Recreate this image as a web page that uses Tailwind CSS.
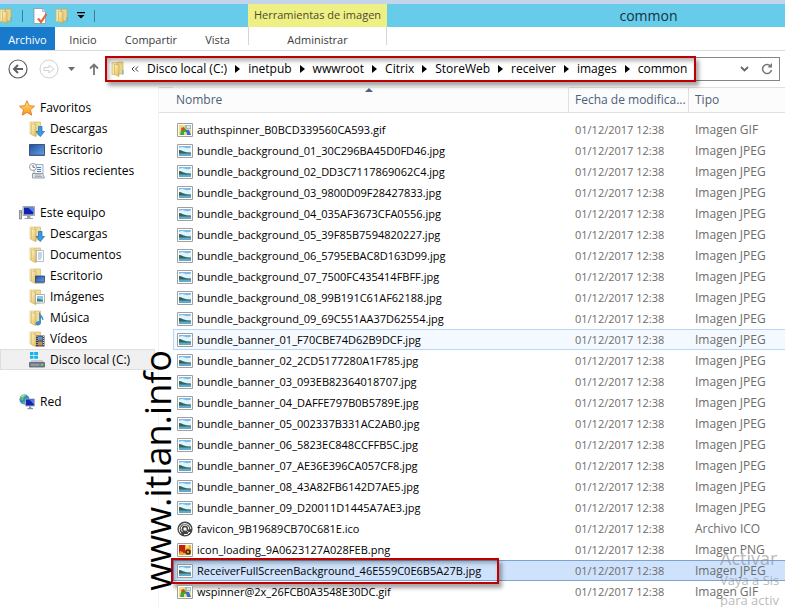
<!DOCTYPE html>
<html lang="es">
<head>
  <meta charset="UTF-8" />
  <meta name="viewport" content="width=device-width, initial-scale=1.0"/>
  <title>common</title>
  <script src="https://cdn.jsdelivr.net/npm/@tailwindcss/browser@4"></script>
</head>
<body class="relative flex h-screen flex-col overflow-hidden bg-white font-['Open_Sans','Noto_Sans',sans-serif] text-[12px] leading-[20px] text-black">

  <!-- Icons -->
  <svg class="absolute size-0" aria-hidden="true">
    <linearGradient id="gFolder" x2="1" y2="1"><stop stop-color="#fdf3c4"/><stop offset="1" stop-color="#dfb957"/></linearGradient>
    <linearGradient id="gScreen" x2="1" y2="1"><stop stop-color="#1f4f9f"/><stop offset="1" stop-color="#6ba2e6"/></linearGradient>
    <linearGradient id="gStar" x2="0" y2="1"><stop stop-color="#ffe86a"/><stop offset="1" stop-color="#f7931e"/></linearGradient>
    <symbol id="folder" viewBox="0 0 16 16">
      <path d="M2 1.500h5v12H2z" fill="#f6e7a6" stroke="#d3b464" stroke-width=".6"/>
      <path d="M7.500 1h5.500v12h-5.500z" fill="#ecd485" stroke="#c9a64f" stroke-width=".6"/>
      <path d="M4.500 3l4.500 1v11.500l-4.500-2z" fill="url(#gFolder)" stroke="#c9a64f" stroke-width=".6"/>
      <path d="M13 9v4.500" stroke="#5aa7e0" stroke-width="1"/>
    </symbol>
    <symbol id="folderBack" viewBox="0 0 16 16">
      <path d="M1 1h5v12H1z" fill="#f8ebb4" stroke="#d6bb72" stroke-width=".6"/>
      <path d="M6 1h5.500v13H6z" fill="#efdc98" stroke="#cfb062" stroke-width=".6"/>
      <path d="M2.500 2.500l4.500 1.200v12l-4.500-2z" fill="url(#gFolder)" stroke="#cfae5c" stroke-width=".6"/>
    </symbol>
    <symbol id="downloads" viewBox="0 0 16 16">
      <use href="#folderBack"/>
      <path d="M9.500 5.500h3.500v5h2.500L11.300 15.600 7 10.500h2.500z" fill="#3a9be4" stroke="#1e68b4" stroke-width=".7"/>
    </symbol>
    <symbol id="documents" viewBox="0 0 16 16">
      <use href="#folderBack"/>
      <path d="M7.500 3.500h7v11h-7z" fill="#fff" stroke="#9aa4ae" stroke-width=".7"/>
      <path d="M9 6h4M9 8h4M9 10h4M9 12h3" stroke="#6f94c4" stroke-width=".8"/>
    </symbol>
    <symbol id="desktopFolder" viewBox="0 0 16 16">
      <use href="#folderBack"/>
      <path d="M6.500 8h9v6h-9z" fill="url(#gScreen)" stroke="#264373" stroke-width=".8"/>
      <path d="M6.500 14.800h9" stroke="#4f5f75"/>
    </symbol>
    <symbol id="pictures" viewBox="0 0 16 16">
      <use href="#folderBack"/>
      <path d="M6.500 5.500h9v8.500h-9z" fill="#fff" stroke="#9aa0a6" stroke-width=".8"/>
      <path d="M8 7h6v5.500H8z" fill="#8cc4ea"/><path d="M8 9.500q3 .5 6 1.500v1.500H8z" fill="#3b8a7c"/>
    </symbol>
    <symbol id="music" viewBox="0 0 16 16">
      <use href="#folderBack"/>
      <path d="M10.500 2.500c.5 3 4 3.500 3.500 7.500-.6-1.800-1.700-2.500-2.500-2.700v5.200c0 1.800-1.200 2.700-2.600 2.700-1.200 0-2-.7-2-1.700 0-1.500 1.700-2.300 3.600-2z" fill="#2f95dd" stroke="#1d6cac" stroke-width=".5"/>
    </symbol>
    <symbol id="videos" viewBox="0 0 16 16">
      <use href="#folderBack"/>
      <path d="M7 4.500h8.500v11H7z" fill="#3d4043"/>
      <path d="M9 5.500h4.500v4H9z" fill="#5b93d3"/><path d="M9 10.500h4.500v4H9z" fill="#c48d58"/>
      <path d="M8 5v10M14.500 5v10" stroke="#e6e6e6" stroke-width=".9" stroke-dasharray="1 1"/>
    </symbol>
    <symbol id="desktop" viewBox="0 0 16 16">
      <path d="M.500 2.500h15v11H.500z" fill="url(#gScreen)" stroke="#34496b" stroke-width=".9"/>
      <path d="M1 13h14" stroke="#4a6490"/>
    </symbol>
    <symbol id="recent" viewBox="0 0 16 16">
      <path d="M5 1.500h9v9.500H5z" fill="#f4f7fa" stroke="#8d99a6" stroke-width=".8"/>
      <path d="M8 4.500h4M8 6.500h4M8 8.500h4" stroke="#4a86c4"/>
      <path d="M3.500 10.500h10l2 4.500h-12z" fill="#dfe4ea" stroke="#838d98" stroke-width=".8"/>
      <path d="M6 12h6M6 13.500h7" stroke="#8c96a0" stroke-width=".7"/>
      <circle cx="4" cy="4" r="3.500" fill="#fff" stroke="#87919b" stroke-width=".9"/>
      <path d="M4 2v2.300h2" fill="none" stroke="#48515a" stroke-width=".8"/>
    </symbol>
    <symbol id="star" viewBox="0 0 16 16">
      <path d="M8 .700l2.200 5 5.300.5-4 3.600 1.200 5.400L8 12.400l-4.700 2.800 1.200-5.400-4-3.600 5.300-.5z" fill="url(#gStar)" stroke="#e0701a" stroke-width=".8"/>
    </symbol>
    <symbol id="computer" viewBox="0 0 16 16">
      <path d="M.500 5.500h2v8.500h-2z" fill="#c7cbce" stroke="#73797e" stroke-width=".8"/><path d="M1 7.500h1" stroke="#53b848"/>
      <path d="M4 1.500h11.500v9H4z" fill="#dce0e3" stroke="#8c9399" stroke-width=".8"/>
      <path d="M5 2.500h9.500v7H5z" fill="#1323b0"/><path d="M9 2.500h5.500v5z" fill="#5d83ea"/>
      <path d="M8 11h3.500v2H14v1H5.500v-1H8z" fill="#9aa1a7"/>
    </symbol>
    <symbol id="drive" viewBox="0 0 16 16">
      <path d="M1 0h3.500v3H1zM5.200 0H9v3H5.200zM1 3.700h3.500v3H1zM5.200 3.700H9v3H5.200z" fill="#12b5ee"/>
      <path d="M2.500 8h11l2 3H.500z" fill="#c6cbcf"/>
      <path d="M.500 10.500h15v4.500H.500z" fill="#76828d" stroke="#56616b" stroke-width=".8"/>
      <path d="M2 13h8" stroke="#a4afb8"/><path d="M12 12.800h2" stroke="#5fe05a" stroke-width="1.500"/>
    </symbol>
    <symbol id="network" viewBox="0 0 16 16">
      <circle cx="5.500" cy="5.500" r="5" fill="#2b88d9"/>
      <path d="M1 3.500C2 1.500 4 .500 6 .600L7.500 2 5 3.500 4.500 6 2 6.500zM3 8l3-.5 1 2-1.500 1z" fill="#5fc05b"/>
      <path d="M2.500 2.500l3-1" stroke="#d9f4e0"/>
      <path d="M6.500 5h9v7h-9z" fill="#1626b4" stroke="#aab1b8" stroke-width=".9"/><path d="M10.500 5.500H15v5z" fill="#567fe6"/>
      <path d="M10 12.500h2.200v1.500H14v1.200H8.500V14H10z" fill="#8b939a"/>
    </symbol>
    <symbol id="jpg" viewBox="0 0 16 14">
      <path d="M.500.500h15v13H.500z" fill="#fff" stroke="#a0a0a0"/>
      <path d="M2 2h12v10H2z" fill="#7cbbe8"/>
      <path d="M2 4q3-1.500 5-.5 3 1.500 7 0V9H2z" fill="#e3f3fa"/>
      <path d="M2 6q2 0 4 1.300 3 1.200 8 1.200V10H2z" fill="#2a6659"/>
      <path d="M2 9.500h12V12H2z" fill="#62a8cc"/>
    </symbol>
    <symbol id="gif" viewBox="0 0 16 14">
      <path d="M.500.500h15v13H.500z" fill="#fff" stroke="#a0a0a0"/>
      <path d="M2 2h12v10H2z" fill="#f3dd78"/><path d="M8 2h6v4H8z" fill="#8fbdf2"/>
      <path d="M3 12l1-5 3-2 3 2v2H7v3z" fill="#43a636"/><path d="M4 5l3-1 1 2-3 2z" fill="#d8452c"/>
      <path d="M9 7l3 0 2 5h-4z" fill="#3b6cd2"/><path d="M10 3h3v2h-3z" fill="#f8e9a0"/>
    </symbol>
    <symbol id="png" viewBox="0 0 16 14">
      <path d="M.500.500h15v13H.500z" fill="#fff" stroke="#a0a0a0"/>
      <path d="M2 2h12v10H2z" fill="#efb437"/>
      <path d="M2 2h6v8H2z" fill="#c3200f"/><path d="M9 2h3l-1 3H9z" fill="#fbe27c"/>
      <circle cx="11" cy="9" r="2.800" fill="#4c2507"/><circle cx="11" cy="9" r="1.200" fill="#f28d1b"/>
      <path d="M3 8l3 1 1 3H2z" fill="#f0a225"/>
    </symbol>
    <symbol id="ico" viewBox="0 0 16 16">
      <circle cx="8" cy="8" r="7.600" fill="#444"/>
      <path d="M4 12.500A5.800 5.800 0 1 1 13.800 8M5.500 10.700A3.800 3.800 0 1 1 11.700 8.500M13 11A5.800 5.800 0 0 1 7 13.700" fill="none" stroke="#fff" stroke-width="1"/>
      <circle cx="8" cy="8" r="1.700" fill="#fff"/><path d="M8 8l4 4" stroke="#ddd" stroke-width=".8"/>
    </symbol>
    <symbol id="arrow" viewBox="0 0 5 8"><path d="M0 0l5 4-5 4z"/></symbol>
  </svg>

  <!-- Title bar -->
  <header class="flex h-[27px] shrink-0 border-t-4 border-[#c3d4eb] bg-[#67cbea]">
    <div class="flex w-[248px] shrink-0 items-center">
      <svg class="-ml-[2px] size-[16px]"><use href="#folder"/></svg>
      <span class="ml-[8px] h-[12px] w-px bg-[#3f7f97]"></span>
      <button class="ml-[9px]" aria-label="Propiedades">
        <svg class="size-[16px]" viewBox="0 0 16 16"><path d="M2 .500h8.500l3 3v12H2z" fill="#fff" stroke="#8c98a3" stroke-width=".8"/><path d="M10.500.500v3h3" fill="#dbe4ec" stroke="#8c98a3" stroke-width=".6"/><path d="M6 10.500l3 3.500 5.500-8" fill="none" stroke="#e2653c" stroke-width="2.200"/></svg>
      </button>
      <button class="ml-[6px]" aria-label="Nueva carpeta"><svg class="size-[16px]"><use href="#folder"/></svg></button>
      <button class="ml-[7px]" aria-label="Personalizar">
        <svg class="h-[7px] w-[8px]" viewBox="0 0 8 7"><path d="M0 0h8v1.300H0zM.500 3h7L4 6.500z"/></svg>
      </button>
      <span class="ml-[9px] h-[12px] w-px bg-[#3f7f97]"></span>
    </div>
    <div class="w-[139px] shrink-0 bg-[#eff083] text-center text-[11px] leading-[21px] text-[#4b4b33]">Herramientas de imagen</div>
    <h1 class="flex-1 pl-[125px] text-center text-[14px] leading-[24px] text-[#14333f]">common</h1>
  </header>

  <!-- Ribbon tabs -->
  <nav class="flex h-[24px] shrink-0 border-b border-[#dadbdc] text-[11px] leading-[25px] text-[#3c3c3c]">
    <a href="#" class="w-[55px] bg-[#1979ca] text-center text-white">Archivo</a>
    <a href="#" class="w-[56px] text-center">Inicio</a>
    <a href="#" class="w-[80px] text-center">Compartir</a>
    <a href="#" class="w-[53px] text-center">Vista</a>
    <a href="#" class="ml-[4px] h-[18px] w-[139px] border-x border-[#d5d5d5] text-center">Administrar</a>
  </nav>

  <!-- Address bar -->
  <div class="flex h-[36px] shrink-0 items-center">
    <button class="ml-[8px]" aria-label="Atrás">
      <svg class="size-[20px]" viewBox="0 0 20 20" fill="none" stroke="#606060"><circle cx="10" cy="10" r="9" stroke-width="1.200"/><path d="M15 10H6M10 6l-4 4 4 4" stroke-width="2"/></svg>
    </button>
    <button class="ml-[11px]" aria-label="Adelante">
      <svg class="size-[20px]" viewBox="0 0 20 20" fill="none" stroke="#d0d0d0"><circle cx="10" cy="10" r="9"/><path d="M5 8.500h5V6l5 4-5 4v-2.500H5z"/></svg>
    </button>
    <button class="ml-[9px]" aria-label="Ubicaciones recientes"><svg class="h-[4px] w-[7px]" viewBox="0 0 7 4"><path d="M0 0h7L3.500 4z" fill="#6a6a6a"/></svg></button>
    <button class="ml-[14px]" aria-label="Subir"><svg class="h-[12px] w-[10px]" viewBox="0 0 10 12" fill="none" stroke="#777" stroke-width="1.800"><path d="M5 12V1.500M1 5.500l4-4 4 4"/></svg></button>
    <div class="relative mr-[5px] ml-[7px] flex h-[24px] flex-1 items-center border border-[#858585]">
      <div class="absolute -inset-y-[2px] -left-[2px] w-[591px] border-2 border-[#c00000] shadow-[3px_4px_4px_rgba(0,0,0,0.35),inset_2px_3px_4px_rgba(0,0,0,0.3)]"></div>
      <svg class="ml-[3px] size-[16px] shrink-0"><use href="#folder"/></svg>
      <svg class="ml-[5px] h-[6px] w-[8px] shrink-0" viewBox="0 0 8 6" fill="none" stroke="#222" stroke-width=".9"><path d="M3.500.500L1 3l2.500 2.500M7 .500L4.500 3 7 5.500"/></svg>
      <ol id="crumbs" class="ml-[8px] flex whitespace-nowrap"></ol>
      <button class="mr-[12px] ml-auto" aria-label="Historial"><svg class="h-[6px] w-[9px]" viewBox="0 0 9 6" fill="none" stroke="#666" stroke-width="1.800"><path d="M1 1l3.500 3.500L8 1"/></svg></button>
      <button class="mr-[6px]" aria-label="Actualizar"><svg class="size-[12px]" viewBox="0 0 12 12"><path d="M9.800 3.500A4.500 4.500 0 1 0 10.500 7" fill="none" stroke="#777" stroke-width="1.500"/><path d="M6.500 4.500H11V0z" fill="#777"/></svg></button>
    </div>
  </div>

  <div class="flex min-h-0 flex-1">
    <!-- Navigation pane -->
    <aside class="w-[159px] shrink-0 border-r border-[#f4f4f4] pt-[10px]">
      <ul id="tree"></ul>
    </aside>

    <!-- File list -->
    <main class="min-w-0 flex-1">
      <table class="w-full table-fixed border-separate border-spacing-0 whitespace-nowrap">
        <colgroup><col class="w-[14px]"><col class="w-[396px]"><col class="w-[120px]"><col></colgroup>
        <thead>
          <tr class="h-[26px] bg-[#fcfcfc] text-left text-[#4c607a] *:border-y *:border-[#e0e0e0] *:p-0 *:font-normal">
            <th></th>
            <th class="relative border-r"><span class="ml-[3px]">Nombre</span>
              <svg class="absolute top-0 left-[192px] h-[4px] w-[8px]" viewBox="0 0 8 4"><path d="M0 4h8L4 0z" fill="#4c6484"/></svg>
            </th>
            <th class="border-r"><span class="ml-[6px]">Fecha de modifica...</span></th>
            <th><span class="ml-[6px]">Tipo</span></th>
          </tr>
          <tr class="h-[6px]"></tr>
        </thead>
        <tbody id="files"></tbody>
      </table>
    </main>
  </div>

  <!-- Watermarks -->
  <div class="absolute top-[350px] left-[138px] rotate-180 text-[36px] leading-[40px] whitespace-nowrap [writing-mode:vertical-rl]">www.itlan.info</div>
  <div class="pointer-events-none absolute top-[546px] right-0 w-[65px] overflow-hidden whitespace-nowrap text-[#8a8a8a]/60">
    <p class="text-[18px] leading-[24px]">Activar</p>
    <p class="text-[13px] leading-[20px]">Vaya a Sis</p>
    <p class="text-[13px] leading-[20px]">para activ</p>
  </div>

  <script>
    const crumbs = ['Disco local (C:)', 'inetpub', 'wwwroot', 'Citrix', 'StoreWeb', 'receiver', 'images', 'common'];

    // [icon, label, level]
    const tree = [
      ['star', 'Favoritos', 0],
      ['downloads', 'Descargas', 1],
      ['desktop', 'Escritorio', 1],
      ['recent', 'Sitios recientes', 1],
      null,
      ['computer', 'Este equipo', 0],
      ['downloads', 'Descargas', 1],
      ['documents', 'Documentos', 1],
      ['desktopFolder', 'Escritorio', 1],
      ['pictures', 'Imágenes', 1],
      ['music', 'Música', 1],
      ['videos', 'Vídeos', 1],
      ['drive', 'Disco local (C:)', 1],
      null,
      ['network', 'Red', 0]
    ];

    const files = [
      'authspinner_B0BCD339560CA593.gif',
      'bundle_background_01_30C296BA45D0FD46.jpg',
      'bundle_background_02_DD3C7117869062C4.jpg',
      'bundle_background_03_9800D09F28427833.jpg',
      'bundle_background_04_035AF3673CFA0556.jpg',
      'bundle_background_05_39F85B7594820227.jpg',
      'bundle_background_06_5795EBAC8D163D99.jpg',
      'bundle_background_07_7500FC435414FBFF.jpg',
      'bundle_background_08_99B191C61AF62188.jpg',
      'bundle_background_09_69C551AA37D62554.jpg',
      'bundle_banner_01_F70CBE74D62B9DCF.jpg',
      'bundle_banner_02_2CD5177280A1F785.jpg',
      'bundle_banner_03_093EB82364018707.jpg',
      'bundle_banner_04_DAFFE797B0B5789E.jpg',
      'bundle_banner_05_002337B331AC2AB0.jpg',
      'bundle_banner_06_5823EC848CCFFB5C.jpg',
      'bundle_banner_07_AE36E396CA057CF8.jpg',
      'bundle_banner_08_43A82FB6142D7AE5.jpg',
      'bundle_banner_09_D20011D1445A7AE3.jpg',
      'favicon_9B19689CB70C681E.ico',
      'icon_loading_9A0623127A028FEB.png',
      'ReceiverFullScreenBackground_46E559C0E6B5A27B.jpg',
      'wspinner@2x_26FCB0A3548E30DC.gif'
    ];
    const types = { gif: 'Imagen GIF', jpg: 'Imagen JPEG', png: 'Imagen PNG', ico: 'Archivo ICO' };

    document.getElementById('crumbs').innerHTML = crumbs.map((name, i) => `
      <li class="flex items-center">${i ? '<svg class="mx-[8px] h-[8px] w-[5px]"><use href="#arrow"/></svg>' : ''}<a href="#">${name}</a></li>`).join('');

    document.getElementById('tree').innerHTML = tree.map(item => {
      if (!item) return '<li class="h-[21px]"></li>';
      const [icon, label, level] = item;
      const pad = level ? 'pl-[28px]' : 'pl-[18px]';
      const box = icon === 'drive' ? 'border-[#dedede] bg-[#f0f0f0]' : 'border-transparent';
      return `<li><a href="#" class="mr-[3px] flex h-[21px] items-center gap-[5px] border ${box} ${pad}"><svg class="size-[16px] shrink-0"><use href="#${icon}"/></svg>${label}</a></li>`;
    }).join('');

    document.getElementById('files').innerHTML = files.map((name, i) => {
      const ext = name.split('.').pop();
      let box = 'border-transparent';
      if (i === 10) box = 'border-[#b8d6fb] bg-[#f4f9ff]';
      if (i === 21) box = 'border-[#7da2ce] bg-[#cfe2fc]';
      const mark = i === 21 ? '<span class="absolute -top-[3px] -left-[3px] h-[26px] w-[328px] border-2 border-[#c00000] shadow-[3px_4px_4px_rgba(0,0,0,0.35),inset_2px_3px_4px_rgba(0,0,0,0.3)]"></span>' : '';
      return `
        <tr class="h-[21px]">
          <td class="p-0"></td>
          <td class="relative border-y border-l p-0 text-[11px] leading-[19px] ${box}"><div class="flex items-center gap-[4px] pl-[3px]"><svg class="size-[16px] shrink-0"><use href="#${ext}"/></svg>${name}</div>${mark}</td>
          <td class="border-y p-0 pl-[6px] text-[11px] leading-[19px] text-[#6d6d6d] ${box}">01/12/2017 12:38</td>
          <td class="border-y p-0 pl-[6px] leading-[19px] text-[#6d6d6d] ${box}">${types[ext]}</td>
        </tr>`;
    }).join('');
  </script>
</body>
</html>
